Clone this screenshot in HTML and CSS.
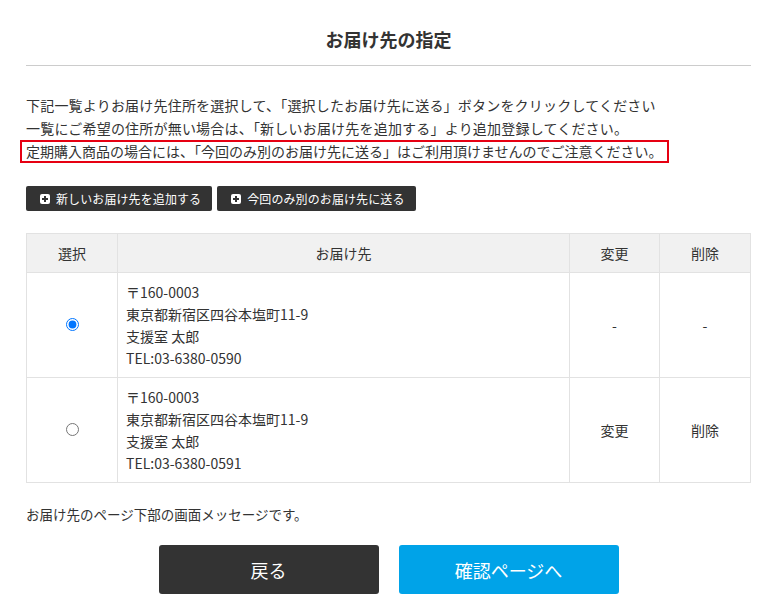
FILE: index.html
```html
<!DOCTYPE html>
<html lang="ja">
<head>
    <meta charset="UTF-8">
    <meta name="viewport" content="width=device-width, initial-scale=1.0">
    <title>お届け先の指定</title>
    <link rel="stylesheet" href="styles.css">
</head>
<body>
    <div class="page">
        <h2 class="page-title">お届け先の指定</h2>

        <div class="guide">
            <p>下記一覧よりお届け先住所を選択して、「選択したお届け先に送る」ボタンをクリックしてください</p>
            <p>一覧にご希望の住所が無い場合は、「新しいお届け先を追加する」より追加登録してください。</p>
            <p><span class="attention">定期購入商品の場合には、「今回のみ別のお届け先に送る」はご利用頂けませんのでご注意ください。</span></p>
        </div>

        <div class="actions">
            <button type="button" class="btn-small"><span class="plus"></span>新しいお届け先を追加する</button>
            <button type="button" class="btn-small"><span class="plus"></span>今回のみ別のお届け先に送る</button>
        </div>

        <table class="address-table">
            <thead>
                <tr>
                    <th class="col-select">選択</th>
                    <th class="col-address">お届け先</th>
                    <th class="col-edit">変更</th>
                    <th class="col-delete">削除</th>
                </tr>
            </thead>
            <tbody>
                <tr>
                    <td class="center"><input type="radio" name="deliv" checked></td>
                    <td class="address">〒160-0003<br>東京都新宿区四谷本塩町11-9<br>支援室 太郎<br>TEL:03-6380-0590</td>
                    <td class="center">-</td>
                    <td class="center">-</td>
                </tr>
                <tr>
                    <td class="center"><input type="radio" name="deliv"></td>
                    <td class="address">〒160-0003<br>東京都新宿区四谷本塩町11-9<br>支援室 太郎<br>TEL:03-6380-0591</td>
                    <td class="center">変更</td>
                    <td class="center">削除</td>
                </tr>
            </tbody>
        </table>

        <p class="note">お届け先のページ下部の画面メッセージです。</p>

        <div class="nav-buttons">
            <button type="button" class="btn-back">戻る</button>
            <button type="button" class="btn-next">確認ページへ</button>
        </div>
    </div>
</body>
</html>
```

FILE: styles.css
```css
body {
    margin: 0;
    font-family: "Noto Sans CJK JP", "Noto Sans", sans-serif;
    color: #333;
    background: #fff;
}
.page {
    margin: 0 21px 0 26px;
}
.page-title {
    margin: 27px 0 0;
    padding-bottom: 13px;
    border-bottom: 1px solid #ccc;
    text-align: center;
    font-size: 18px;
    line-height: 25px;
    font-weight: bold;
}
.guide {
    margin-top: 28px;
    font-size: 14px;
    line-height: 23px;
    letter-spacing: 0.2px;
}
.guide p {
    margin: 0;
}
.attention {
    display: inline-block;
    margin-left: -6px;
    padding: 0 4px;
    border: 2px solid #e60012;
    line-height: 19px;
    letter-spacing: 0;
}
.actions {
    margin-top: 23px;
    display: flex;
    gap: 5px;
}
.btn-small {
    display: flex;
    align-items: center;
    gap: 6px;
    height: 25px;
    padding: 0 11px 0 14px;
    background: #333;
    color: #fff;
    border: none;
    border-radius: 2px;
    font-family: inherit;
    font-size: 12px;
    letter-spacing: 0.1px;
    cursor: pointer;
}
.plus {
    position: relative;
    width: 10px;
    height: 10px;
    background: #fff;
    border-radius: 2px;
}
.plus::before, .plus::after {
    content: "";
    position: absolute;
    background: #333;
}
.plus::before {
    left: 2px;
    top: 4px;
    width: 6px;
    height: 2px;
}
.plus::after {
    left: 4px;
    top: 2px;
    width: 2px;
    height: 6px;
}
.address-table {
    margin-top: 22px;
    width: 100%;
    border-collapse: collapse;
    table-layout: fixed;
    font-size: 14px;
}
.address-table th, .address-table td {
    border: 1px solid #e2e2e2;
    padding: 0;
}
.address-table th {
    height: 38px;
    background: #f1f1f1;
    font-weight: normal;
}
.col-select { width: 90px; }
.col-edit { width: 89px; }
.col-delete { width: 90px; }
.address-table td {
    height: 104px;
}
.address-table td.address {
    padding: 0 8px;
    line-height: 22px;
}
.center {
    text-align: center;
}
.center input {
    margin: 0;
    width: 13px;
    height: 13px;
}
.note {
    margin: 21px 0 0;
    font-size: 13.5px;
    line-height: 20px;
}
.nav-buttons {
    margin-top: 21px;
    display: flex;
    justify-content: center;
    gap: 20px;
}
.nav-buttons button {
    width: 220px;
    height: 49px;
    border: none;
    border-radius: 3px;
    color: #fff;
    font-family: inherit;
    font-size: 18px;
    cursor: pointer;
}
.btn-back {
    background: #333;
}
.btn-next {
    background: #00a3e8;
}
```
